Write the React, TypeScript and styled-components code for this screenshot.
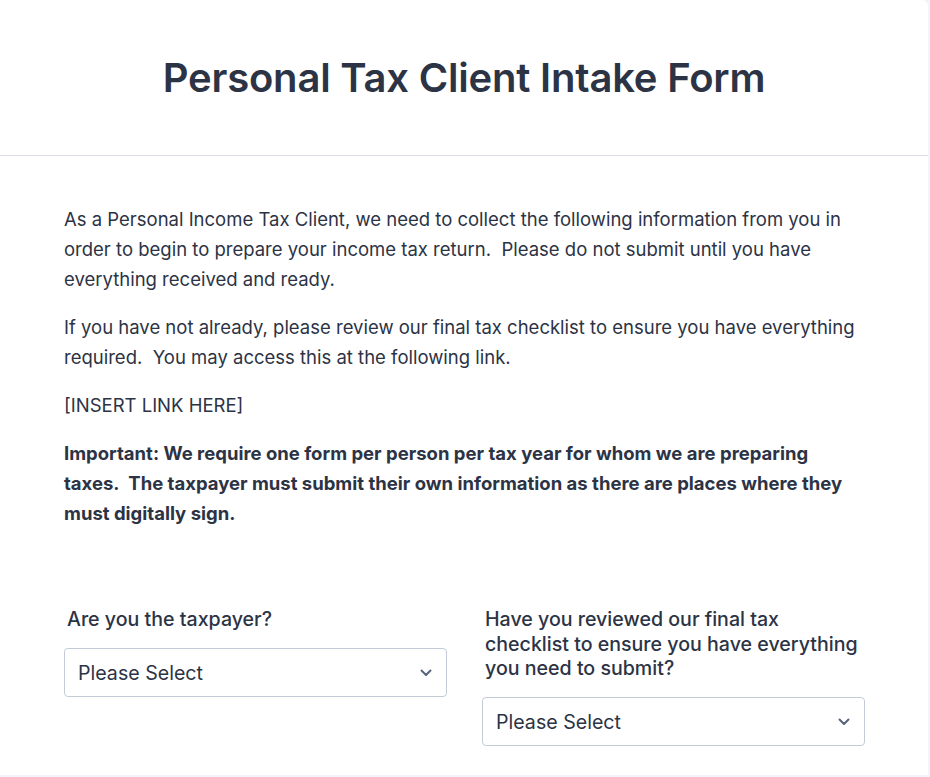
import styled, { createGlobalStyle } from 'styled-components';

const GlobalStyle = createGlobalStyle`
  html, body {
    margin: 0;
    padding: 0;
    background: #f3f3fe;
  }
  body {
    font-family: Inter, "Noto Sans", sans-serif;
    color: #2c3345;
  }
  * {
    box-sizing: border-box;
  }
`;

interface IField {
  id: string;
  label: string;
}

const FIELDS: IField[] = [
  { id: 'taxpayer', label: 'Are you the taxpayer?' },
  {
    id: 'checklist',
    label: 'Have you reviewed our final tax checklist to ensure you have everything you need to submit?',
  },
];

function Chevron() {
  return (
    <svg width="12" height="8" viewBox="0 0 12 8" fill="none">
      <path d="M1.5 1.5L6 6L10.5 1.5" stroke="#57647e" strokeWidth="2" strokeLinecap="round" strokeLinejoin="round" />
    </svg>
  );
}

export default function App() {
  return (
    <>
      <GlobalStyle />
      <Card>
        <Header>
          <Title>Personal Tax Client Intake Form</Title>
        </Header>
        <Body>
          <Paragraph>
            As a Personal Income Tax Client, we need to collect the following information from you in order to
            begin to prepare your income tax return.&nbsp; Please do not submit until you have everything received
            and ready.
          </Paragraph>
          <Paragraph>
            If you have not already, please review our final tax checklist to ensure you have everything
            required.&nbsp; You may access this at the following link.
          </Paragraph>
          <Paragraph>[INSERT LINK HERE]</Paragraph>
          <Paragraph $bold>
            Important: We require one form per person per tax year for whom we are preparing taxes.&nbsp; The
            taxpayer must submit their own information as there are places where they must digitally sign.
          </Paragraph>

          <FieldRow>
            {FIELDS.map((field) => (
              <Field key={field.id}>
                <Label htmlFor={field.id}>{field.label}</Label>
                <SelectBox id={field.id}>
                  <SelectText>Please Select</SelectText>
                  <Chevron />
                </SelectBox>
              </Field>
            ))}
          </FieldRow>
        </Body>
      </Card>
    </>
  );
}

const Card = styled.div`
  width: 928px;
  height: 775px;
  background: #fff;
  border-top-right-radius: 6px;
  overflow: hidden;
`;

const Header = styled.div`
  height: 156px;
  border-bottom: 1px solid #dcdde6;
  display: flex;
  align-items: center;
  justify-content: center;
`;

const Title = styled.h1`
  margin: 0;
  font-size: 40px;
  line-height: 48px;
  font-weight: 600;
  color: #2c3345;
  letter-spacing: -0.2px;
`;

const Body = styled.div`
  padding: 48px 64px 0 64px;
`;

const Paragraph = styled.p<{ $bold?: boolean }>`
  margin: 0 0 18px;
  font-size: 18.5px;
  line-height: 30px;
  font-weight: ${(p) => (p.$bold ? 700 : 400)};
  color: #2c3345;
`;

const FieldRow = styled.div`
  display: grid;
  grid-template-columns: 383px 383px;
  column-gap: 35px;
  margin-top: 79px;
  align-items: start;
`;

const Field = styled.div`
  display: flex;
  flex-direction: column;
`;

const Label = styled.label`
  padding: 0 3px;
  font-size: 19.6px;
  line-height: 24.5px;
  font-weight: 500;
  color: #2c3345;
  margin-bottom: 16.5px;
`;

const SelectBox = styled.div`
  height: 49px;
  border: 1px solid #c3cad8;
  border-radius: 4px;
  display: flex;
  align-items: center;
  justify-content: space-between;
  padding: 0 14px 0 13px;
  background: #fff;
`;

const SelectText = styled.span`
  font-size: 19.6px;
  color: #2c3345;
`;
